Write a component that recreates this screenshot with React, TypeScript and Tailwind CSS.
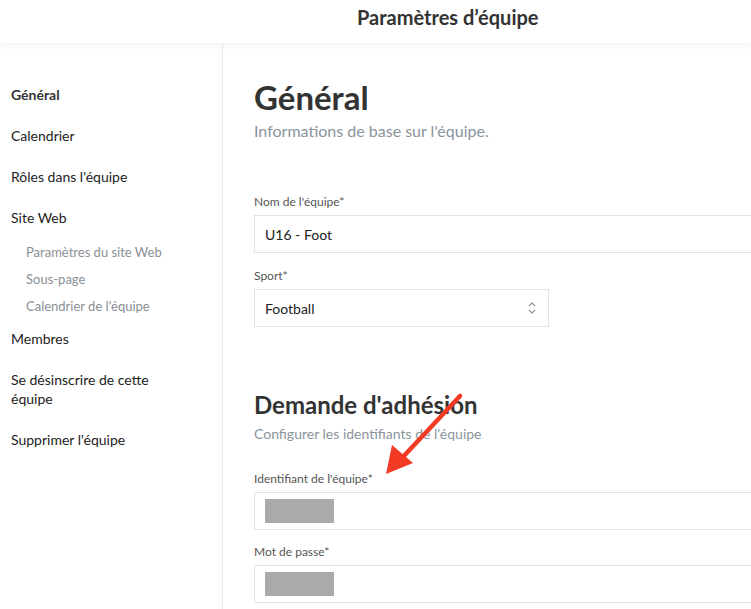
import { ReactNode } from "react";

// Sidebar entries: top-level links and nested links under "Site Web"
type NavItem = {
  label: string;
  active?: boolean;
  children?: string[];
};

const navItems: NavItem[] = [
  { label: "Général", active: true },
  { label: "Calendrier" },
  { label: "Rôles dans l'équipe" },
  {
    label: "Site Web",
    children: ["Paramètres du site Web", "Sous-page", "Calendrier de l'équipe"],
  },
  { label: "Membres" },
  { label: "Se désinscrire de cette équipe" },
  { label: "Supprimer l'équipe" },
];

const Field = ({
  label,
  children,
  className = "",
}: {
  label: string;
  children: ReactNode;
  className?: string;
}) => (
  <div className={className}>
    <div className="text-[12px] leading-[16px] text-[#555]">{label}*</div>
    <div className="mt-[5px]">{children}</div>
  </div>
);

// Grey box that hides the real value in the screenshot
const Redacted = () => (
  <div className="h-[38px] border border-[#e2e2e2] bg-white flex items-center pl-[10px]">
    <span className="block w-[69px] h-[24px] bg-[#aaaaaa]" />
  </div>
);

const Sidebar = () => (
  <aside className="w-[223px] shrink-0 border-r border-[#ececec] pt-[42px] pl-[11px]">
    <nav className="max-w-[165px]">
      {navItems.map((item) => (
        <div key={item.label}>
          <div
            className={`text-[14px] leading-[19px] ${
              item.children ? "mb-[16px]" : "mb-[22px]"
            } ${item.active ? "font-bold text-[#333]" : "text-[#222]"}`}
          >
            {item.label}
          </div>
          {item.children && (
            <div className="pl-[15px] pb-[5px]">
              {item.children.map((sub) => (
                <div
                  key={sub}
                  className="text-[13px] leading-[18px] text-[#8a8f95] mb-[9px]"
                >
                  {sub}
                </div>
              ))}
            </div>
          )}
        </div>
      ))}
    </nav>
  </aside>
);

const Arrow = () => (
  <svg
    className="absolute left-[380px] top-[390px] pointer-events-none"
    width="90"
    height="90"
    viewBox="0 0 90 90"
  >
    <line x1="80" y1="6" x2="22" y2="68" stroke="#f33a24" strokeWidth="4.5" strokeLinecap="round" />
    <polygon points="6,84 12,55 33,73" fill="#f33a24" />
  </svg>
);

export default function App() {
  return (
    <div
      className="relative w-[751px] h-[609px] overflow-hidden bg-white text-[#333]"
      style={{ fontFamily: "Lato, 'Open Sans', sans-serif" }}
    >
      <header className="relative z-10 h-[43px] bg-white shadow-[0_2px_6px_rgba(0,0,0,0.06)] flex items-center pl-[357px]">
        <h1 className="text-[20px] font-bold text-[#333] leading-none -mt-[9px]">
          Paramètres d’équipe
        </h1>
      </header>

      <div className="flex h-[566px]">
        <Sidebar />

        <main className="flex-1 pl-[31px] pt-[35px]">
          <h2 className="text-[33px] font-bold leading-[38px] text-[#333]">
            Général
          </h2>
          <p className="text-[16px] leading-[20px] text-[#8a949c] mt-[5px]">
            Informations de base sur l'équipe.
          </p>

          <Field label="Nom de l'équipe" className="mt-[53px]">
            <div className="h-[38px] -mr-[10px] border border-[#e2e2e2] flex items-center px-[10px] text-[14px] text-[#222]">
              U16 - Foot
            </div>
          </Field>

          <Field label="Sport" className="mt-[15px]">
            <div className="w-[295px] h-[38px] border border-[#e2e2e2] flex items-center justify-between pl-[10px] pr-[11px] text-[14px] text-[#222]">
              <span>Football</span>
              <svg width="10" height="14" viewBox="0 0 10 14" fill="none" stroke="#9a9a9a" strokeWidth="1.3">
                <path d="M2 5 L5 2 L8 5" />
                <path d="M2 9 L5 12 L8 9" />
              </svg>
            </div>
          </Field>

          <h2 className="text-[24px] font-bold leading-[30px] text-[#333] mt-[63px]">
            Demande d'adhésion
          </h2>
          <p className="text-[14px] leading-[18px] text-[#8a949c] mt-[5px]">
            Configurer les identifiants de l'équipe
          </p>

          <Field label="Identifiant de l'équipe" className="mt-[28px] -mr-[10px]">
            <Redacted />
          </Field>

          <Field label="Mot de passe" className="mt-[14px] -mr-[10px]">
            <Redacted />
          </Field>
        </main>
      </div>

      <Arrow />
    </div>
  );
}
